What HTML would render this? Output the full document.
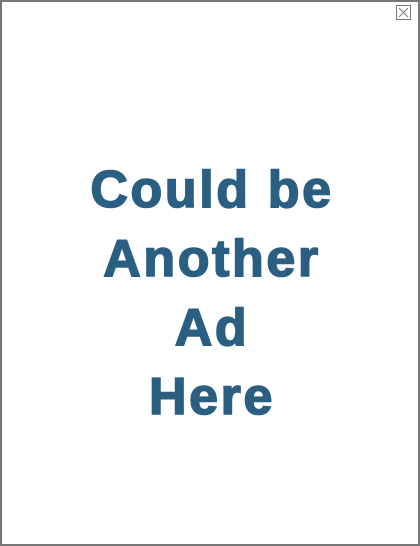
<!DOCTYPE html>
<html><head><style>
html,body{margin:0;padding:0;background:#fff}
.box{position:absolute;left:0;top:0;width:416px;height:542px;border:2px solid #777;background:#fff}
.x{position:absolute;left:396px;top:5px;width:13px;height:13px;border:1px solid #777}
.t{position:absolute;left:2px;top:156px;width:420px;text-align:center;font-family:"Liberation Sans",Arial,sans-serif;font-weight:bold;font-size:52px;line-height:69px;color:#2a5f82;letter-spacing:2.6px;-webkit-text-stroke:1.6px #2a5f82}
</style></head><body>
<div class="box"></div>
<div class="x"><svg width="13" height="13" viewBox="0 0 13 13"><path d="M2 2L11 11M11 2L2 11" stroke="#888" stroke-width="1.2"/></svg></div>
<div class="t">Could be<br>Another<br>Ad<br>Here</div>
</body></html>
